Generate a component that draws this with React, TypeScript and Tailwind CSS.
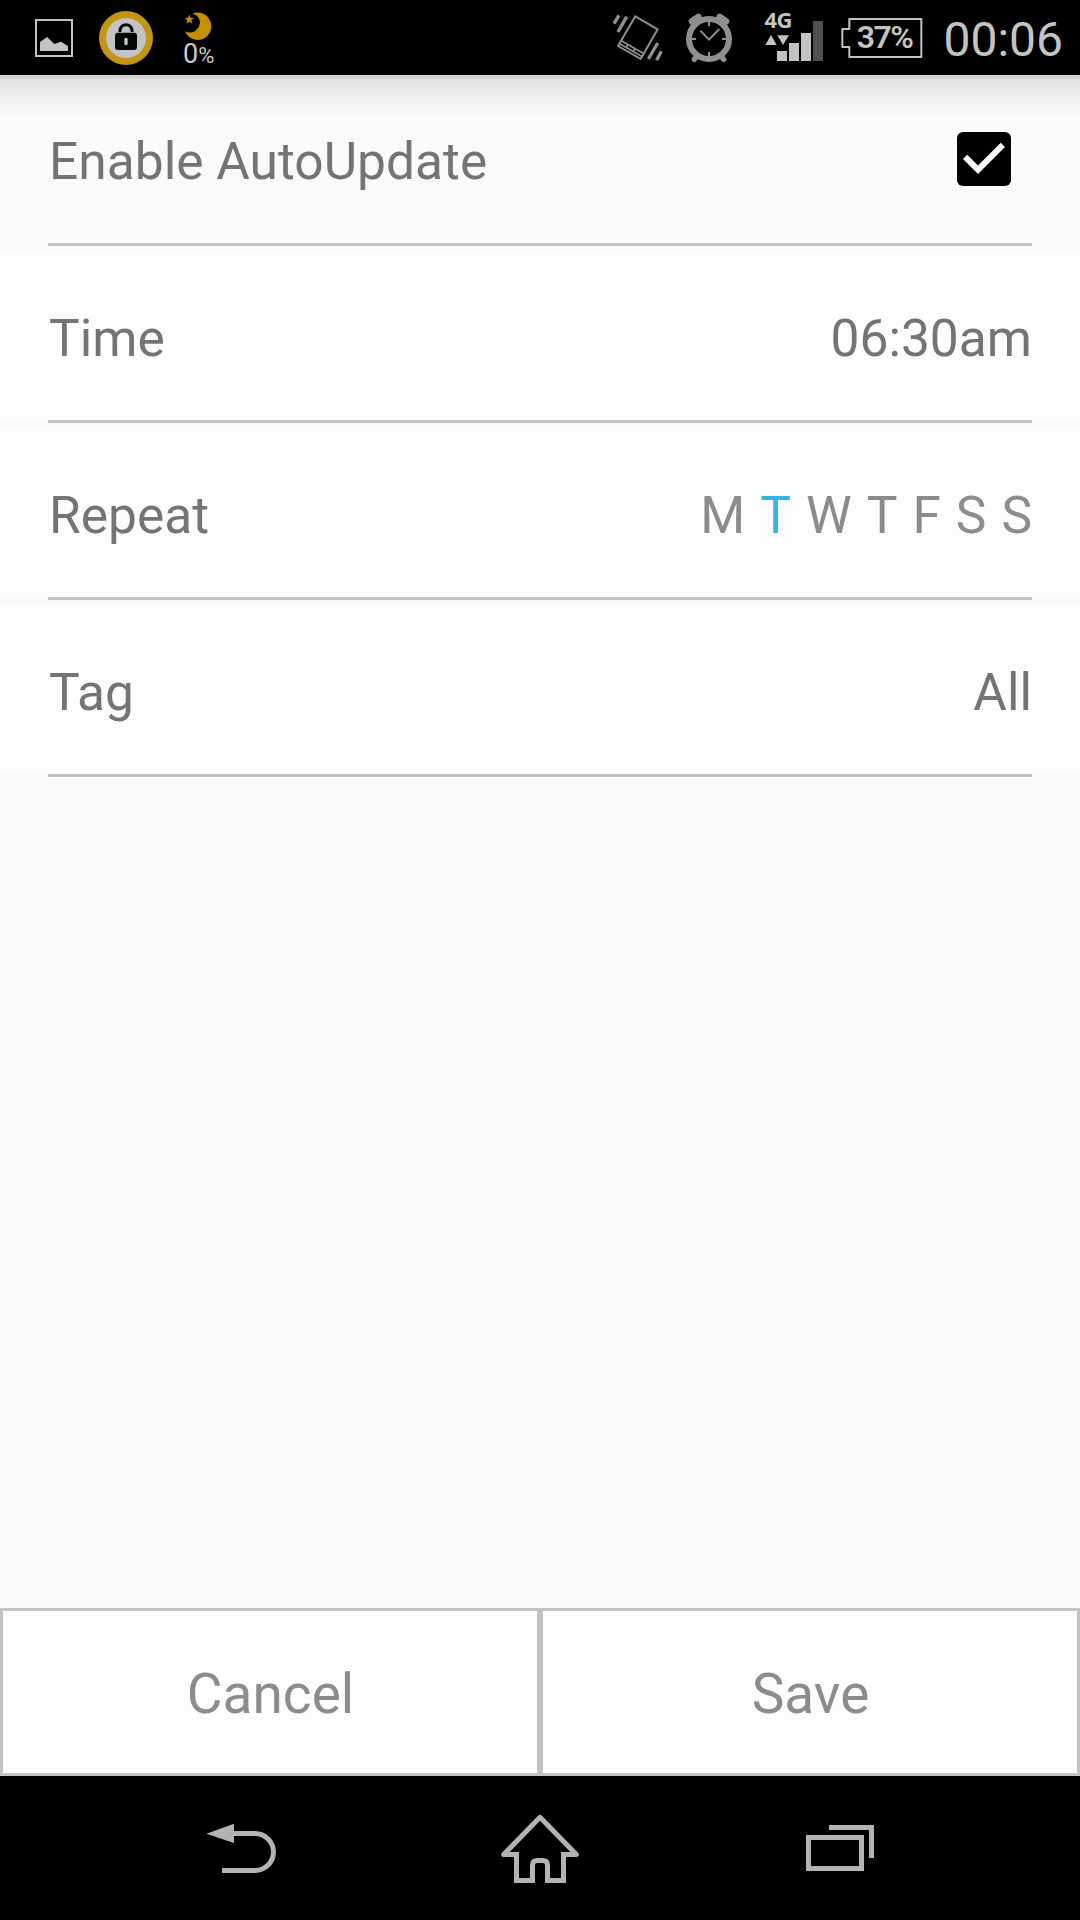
import clsx from "clsx";
import type { ReactNode } from "react";

const days = [
  { id: "mon", label: "M", active: false },
  { id: "tue", label: "T", active: true },
  { id: "wed", label: "W", active: false },
  { id: "thu", label: "T", active: false },
  { id: "fri", label: "F", active: false },
  { id: "sat", label: "S", active: false },
  { id: "sun", label: "S", active: false },
];

function PictureIcon() {
  return (
    <svg className="w-[38px] h-[38px]" viewBox="105 57 114 114">
      <rect x="108" y="60" width="108" height="108" fill="none" stroke="#c3c3c3" strokeWidth="6" />
      <path d="M120 126 141 111 163 132 183 125 204 138V153H120Z" fill="#c3c3c3" />
    </svg>
  );
}

function LockIcon() {
  return (
    <svg className="w-[54px] h-[54px]" viewBox="297 33 162 162">
      <circle cx="378" cy="114" r="81" fill="#c29512" />
      <circle cx="378" cy="114" r="60" fill="#c3c3c3" />
      <path d="M360 96v-4a18 18 0 0 1 36 0v4" fill="none" stroke="#050808" strokeWidth="9" />
      <rect x="345" y="98" width="66" height="52" rx="9" fill="#050808" />
      <rect x="373" y="113" width="10" height="23" rx="5" fill="#c3c3c3" />
    </svg>
  );
}

function MoonIcon() {
  return (
    <svg className="w-[28px] h-[28px]" viewBox="552 34 84 84">
      <path
        d="M577 39A41 41 0 1 1 555 92A29 29 0 0 0 594 82A27 27 0 0 0 577 39Z"
        fill="#c49000"
      />
      <path
        d="M568 42 571.500 51.500 582 52 574 58.500 577 69 568 63 559 69 562 58.500 554 52 564.500 51.500Z"
        fill="#c49000"
      />
    </svg>
  );
}

function VibrateIcon() {
  return (
    <svg className="w-[52px] h-[48px]" viewBox="66 41 156 144" fill="none" stroke="#8f8f8f">
      <path d="M136 48 203 87 152 176 84 137Z" strokeWidth="6" strokeLinejoin="round" />
      <path d="M94 121 162 160M89 130 157 169" strokeWidth="5" />
      <path d="M112 133 110 141M134 145 131 154" strokeWidth="5" />
      <path d="M72 70 87 45M84 95 110 49M175 176 203 128M200 180 214 153" strokeWidth="10" />
    </svg>
  );
}

function AlarmIcon() {
  return (
    <svg className="w-[48px] h-[50px]" viewBox="285 39 144 150" fill="none" stroke="#8f8f8f">
      <circle cx="357" cy="117" r="60" strokeWidth="18" />
      <path d="M306 64 325 51M408 64 389 51" strokeWidth="20" strokeLinecap="round" />
      <path d="M322 166 313 178M392 166 401 178" strokeWidth="16" strokeLinecap="round" />
      <path d="M357 64V78M357 156V170M304 117H318M396 117H410" strokeWidth="6" />
      <path d="M331 92 357 119 388 87" strokeWidth="6" />
    </svg>
  );
}

function SignalIcon() {
  return (
    <div className="relative w-[58px] h-[48px]">
      <svg className="w-[58px] h-[48px]" viewBox="525 33 174 144" fill="#c3c3c3">
        <path d="M543 96 560 126H526ZM562 97H597L579 126Z" />
        <path d="M561 144h30v30h-30zM597 120h30v54h-30zM633 90h30v84h-30z" />
        <path d="M669 54h30v120h-30z" fill="#505050" />
      </svg>
      <span className="absolute -left-px -top-[7px] font-['Noto_Sans'] text-[22px] leading-6 font-bold tracking-[-0.5px] text-[#c3c3c3]">
        4G
      </span>
    </div>
  );
}

function Battery({ level }: { level: number }) {
  return (
    <div className="relative w-[82px] h-[42px] flex items-center justify-end pr-[11px] pb-[2px]">
      <svg className="absolute inset-0 w-[82px] h-[42px]" viewBox="62 48 246 126">
        <path
          d="M87 54H303V168H87V138H66V84H87Z"
          fill="none"
          stroke="#c3c3c3"
          strokeWidth="6"
          strokeLinejoin="round"
        />
      </svg>
      <span className="text-[32px] leading-10 font-semibold tracking-[-1.5px] text-[#c3c3c3]">
        {level}%
      </span>
    </div>
  );
}

function StatusBar() {
  return (
    <header className="h-[75px] bg-black flex items-center justify-between pl-[35px] pr-[17px]">
      <div className="flex items-center">
        <PictureIcon />
        <div className="ml-[26px]">
          <LockIcon />
        </div>
        <div className="ml-[30px] pt-[3px] flex flex-col">
          <div className="ml-[1px]">
            <MoonIcon />
          </div>
          <div className="flex items-baseline h-[27px] pt-[1px] leading-[27px] text-[#c9c9c9]">
            <span className="text-[27px]">0</span>
            <span className="text-[22px]">%</span>
          </div>
        </div>
      </div>
      <div className="flex items-center">
        <VibrateIcon />
        <div className="ml-[21px]">
          <AlarmIcon />
        </div>
        <div className="ml-[32px]">
          <SignalIcon />
        </div>
        <div className="ml-[18px]">
          <Battery level={37} />
        </div>
        <span className="ml-5 pt-1 text-5xl leading-[56px] text-[#c3c3c3]">00:06</span>
      </div>
    </header>
  );
}

type RowProps = {
  label: string;
  plain?: boolean;
  children: ReactNode;
};

function SettingRow({ label, plain, children }: RowProps) {
  return (
    <div className="pb-1.5">
      <div
        className={clsx(
          "h-[168px] px-12 flex items-center justify-between text-[51.5px] leading-[60px] text-[#747474]",
          !plain && "bg-[#fdfdfd]"
        )}
      >
        <span className="pt-[5px] pl-px">{label}</span>
        {children}
      </div>
      <div className="mx-12 h-[3px] bg-[#c2c2c2]" />
    </div>
  );
}

function NavBar() {
  return (
    <nav className="h-[144px] bg-black flex items-start pl-[206px] pt-9">
      <svg className="w-[70px] h-[76px]" viewBox="78 66 210 228">
        <path d="M79 131 162 101V159Z" fill="#b3b3b3" />
        <path d="M160 130.500H225A55.500 55.500 0 0 1 225 241.500H126" fill="none" stroke="#b3b3b3" strokeWidth="15" />
      </svg>
      <svg className="ml-[224px] w-[80px] h-[76px]" viewBox="960 66 240 228" fill="none" stroke="#b3b3b3" strokeWidth="15">
        <path d="M1017 193.500H971L1080 82 1189 193.500H1143" strokeLinejoin="round" />
        <path d="M1009.500 187V271.500H1057.500V226Q1057.500 211.500 1072 211.500H1088Q1102.500 211.500 1102.500 226V271.500H1150.500V187" />
      </svg>
      <svg className="ml-[225px] w-[70px] h-[76px]" viewBox="975 66 210 228" fill="none" stroke="#b3b3b3" strokeWidth="15">
        <rect x="985.500" y="142.500" width="159" height="93" />
        <path d="M1047 112.500H1174.500V204" />
      </svg>
    </nav>
  );
}

export default function App() {
  return (
    <div className="w-[1080px] h-[1920px] flex flex-col bg-[#fafafa] font-[Roboto,sans-serif]">
      <StatusBar />
      <main className="relative flex-1">
        {/* shadow cast by the status bar */}
        <div className="absolute inset-x-0 top-0 h-[42px] bg-linear-to-b from-[#dedede] via-[#f1f1f1] to-[#fafafa] border-t-[3px] border-[#d2d2d2]" />
        <div className="relative">
          <SettingRow label="Enable AutoUpdate" plain>
            <svg className="mr-[21px] w-[54px] h-[54px] rounded-md bg-black" viewBox="3 3 18 18">
              <path d="m10 17-5-5 1.410-1.410L10 14.170l7.590-7.590L19 8z" fill="#fafafa" />
            </svg>
          </SettingRow>
          <SettingRow label="Time">
            <span className="pt-[5px]">06:30am</span>
          </SettingRow>
          <SettingRow label="Repeat">
            <div className="pt-[5px] flex gap-[15px] text-[#8c8c8c]">
              {days.map((day) => (
                <span key={day.id} className={clsx(day.active && "text-[#33b5e5]")}>
                  {day.label}
                </span>
              ))}
            </div>
          </SettingRow>
          <SettingRow label="Tag">
            <span className="pt-[5px]">All</span>
          </SettingRow>
        </div>
      </main>
      <footer className="h-[168px] flex text-[55px] text-[#8c8c8c]">
        <button className="flex-1 border-[3px] border-[#c2c2c2] bg-[#fdfdfd] pt-1 pl-px">Cancel</button>
        <button className="flex-1 border-[3px] border-[#c2c2c2] bg-[#fdfdfd] pt-1 pl-px">Save</button>
      </footer>
      <NavBar />
    </div>
  );
}
